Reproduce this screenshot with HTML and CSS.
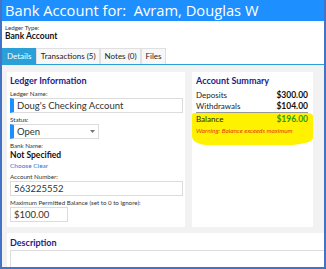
FILE: index.html
```html
<!DOCTYPE html>
<html>
<head>
    <title>Bank Account</title>
    <link rel="stylesheet" href="styles.css">
</head>
<body>

<div class="window">
    <div class="title">Bank Account for:&nbsp; Avram, Douglas W</div>

    <div class="ledger-type">
        <div class="label">Ledger Type:</div>
        <div class="value">Bank Account</div>
    </div>

    <div class="tabs">
        <span class="tab active">Details</span>
        <span class="tab">Transactions (5)</span>
        <span class="tab">Notes (0)</span>
        <span class="tab">Files</span>
    </div>

    <div class="content">
        <div class="columns">
            <div class="panel info">
                <div class="heading">Ledger Information</div>

                <div class="label">Ledger Name:</div>
                <div class="input required wide">Doug's Checking Account</div>

                <div class="label">Status:</div>
                <div class="input required select">
                    Open
                    <svg class="arrow" width="5" height="3" viewBox="0 0 5 3"><polygon points="0,0 5,0 2.5,3" fill="#777"/></svg>
                </div>

                <div class="label">Bank Name:</div>
                <div class="value">Not Specified</div>
                <div class="links"><a href="#">Choose</a> <a href="#">Clear</a></div>

                <div class="label">Account Number:</div>
                <div class="input wide">563225552</div>

                <div class="label">Maximum Permitted Balance (set to 0 to ignore):</div>
                <div class="input small">$100.00</div>
            </div>

            <div class="panel summary">
                <div class="heading">Account Summary</div>
                <div class="row"><span>Deposits</span><b>$300.00</b></div>
                <div class="row ruled"><span>Withdrawals</span><b>$104.00</b></div>
                <div class="highlight">
                    <div class="row"><span>Balance</span><b class="good">$196.00</b></div>
                    <div class="warning">Warning: Balance exceeds maximum</div>
                </div>
            </div>
        </div>

        <div class="panel description">
            <div class="heading">Description</div>
            <div class="textarea"></div>
        </div>
    </div>
</div>

</body>
</html>
```

FILE: styles.css
```css
BODY {
    margin : 0;
    font-family : Lato, "Open Sans", sans-serif;
    color : #111;
}
.window {
    width : 326px;
    height : 269px;
    box-sizing : border-box;
    border : 2px solid #4472c4;
    border-top : 0;
    overflow : hidden;
    background : #fff;
}
.title {
    height : 21px;
    line-height : 21px;
    padding-left : 3px;
    background : #1e8fff;
    color : #fff;
    font-family : "Open Sans", sans-serif;
    font-size : 14.7px;
    white-space : nowrap;
}

.label {
    font-size : 6.2px;
    line-height : 8px;
    color : #333;
}
.value {
    font-size : 8.5px;
    line-height : 11px;
    font-weight : bold;
}
.ledger-type {
    padding : 3px 3px 0;
}
.ledger-type .label {
    line-height : 7px;
}

/* tabs */
.tabs {
    display : flex;
    margin-top : 6px;
    border-bottom : 1px solid #2a9fd8;
}
.tab {
    height : 15px;
    line-height : 15px;
    padding : 0 3.5px;
    font-size : 8px;
    color : #222;
    background : #f7f7f7;
    border : 1px solid #e0e0e0;
    border-bottom : 0;
    white-space : nowrap;
}
.tab.active {
    padding : 0 4px;
    background : #2a9fd8;
    border-color : #2a9fd8;
    color : #fff;
}

/* content */
.content {
    height : 100%;
    background : #f2f2f2;
    padding : 7px 0 0 5px;
}
.columns {
    display : flex;
    gap : 7px;
}
.panel {
    background : #fff;
    box-sizing : border-box;
}
.heading {
    font-size : 9px;
    line-height : 12px;
    font-weight : bold;
    color : #1c1c8c;
}
.info {
    width : 178px;
    height : 155px;
    padding : 3px 2px 0 3px;
}
.info .heading {
    margin-bottom : 3px;
}
.info .input + .label,
.info .links + .label,
.info .value + .label {
    margin-top : 3px;
}
.input {
    position : relative;
    box-sizing : border-box;
    height : 15px;
    line-height : 13px;
    padding-left : 3px;
    border : 1px solid #dcdcdc;
    font-size : 9.5px;
    color : #333;
}
.input.required {
    border-left : 4px solid #1e8fff;
}
.input.wide {
    width : 173px;
}
.input.select {
    width : 89px;
}
.input.small {
    width : 58px;
}
.arrow {
    position : absolute;
    right : 3px;
    top : 5px;
}
.links {
    margin-top : 1px;
    font-size : 6.5px;
    line-height : 8px;
}
.links A {
    color : #2f72d0;
    text-decoration : none;
}

/* summary */
.summary {
    width : 121px;
    height : 155px;
    padding : 3px 5px 0 4px;
}
.summary .heading {
    margin-bottom : 3px;
}
.row {
    display : flex;
    justify-content : space-between;
    font-size : 8px;
    line-height : 11px;
    color : #222;
}
.row B {
    font-size : 8.5px;
    color : #111;
}
.row.ruled {
    border-bottom : 1px solid #999;
}
.highlight {
    padding : 1px 5px 10px 4px;
    margin : 0 -5px 0 -4px;
    background : #fff200;
    border-radius : 2px 5px 26px 14px / 2px 3px 7px 9px;
}
.row B.good {
    color : #2f9a10;
}
.warning {
    margin-top : 2px;
    font-size : 6.4px;
    line-height : 8px;
    font-style : italic;
    color : #e8321a;
}

/* description */
.description {
    width : 340px;
    margin-top : 6px;
    padding : 4px 3px 0;
    height : 40px;
}
.textarea {
    margin-top : 1px;
    height : 30px;
    border : 1px solid #dcdcdc;
}
```
